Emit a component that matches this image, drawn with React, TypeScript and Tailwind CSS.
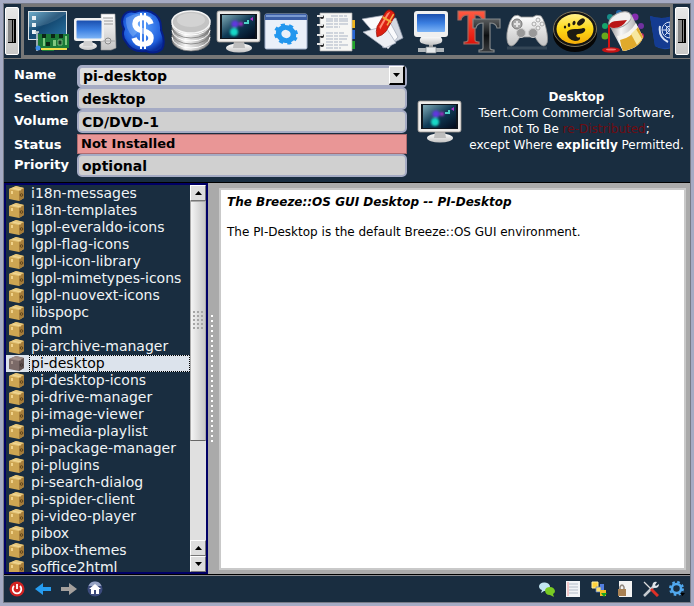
import type { ReactNode } from "react"

const packages = [
	"i18n-messages",
	"i18n-templates",
	"lgpl-everaldo-icons",
	"lgpl-flag-icons",
	"lgpl-icon-library",
	"lgpl-mimetypes-icons",
	"lgpl-nuovext-icons",
	"libspopc",
	"pdm",
	"pi-archive-manager",
	"pi-desktop",
	"pi-desktop-icons",
	"pi-drive-manager",
	"pi-image-viewer",
	"pi-media-playlist",
	"pi-package-manager",
	"pi-plugins",
	"pi-search-dialog",
	"pi-spider-client",
	"pi-video-player",
	"pibox",
	"pibox-themes",
	"soffice2html"
]

const Gradients = () => (
	<svg className="absolute size-0" aria-hidden="true">
		<defs>
			<linearGradient id="blueScreen" x1="0" y1="0" x2="0" y2="1">
				<stop offset="0" stopColor="#1b4fae" />
				<stop offset="0.5" stopColor="#3a7ee0" />
				<stop offset="1" stopColor="#7db4f6" />
			</linearGradient>
			<linearGradient id="tealScreen" x1="0" y1="0" x2="1" y2="1">
				<stop offset="0" stopColor="#7fa9b5" />
				<stop offset="0.5" stopColor="#0f3a56" />
				<stop offset="1" stopColor="#020a1c" />
			</linearGradient>
			<linearGradient id="deepScreen" x1="0" y1="0" x2="1" y2="1">
				<stop offset="0" stopColor="#5ba3c6" />
				<stop offset="0.45" stopColor="#13476f" />
				<stop offset="1" stopColor="#2c77a8" />
			</linearGradient>
			<linearGradient id="plastic" x1="0" y1="0" x2="0" y2="1">
				<stop offset="0" stopColor="#ffffff" />
				<stop offset="1" stopColor="#c3c3c3" />
			</linearGradient>
			<linearGradient id="metal" x1="0" y1="0" x2="1" y2="0">
				<stop offset="0" stopColor="#8b8b8b" />
				<stop offset="0.35" stopColor="#f7f7f7" />
				<stop offset="0.7" stopColor="#c4c4c4" />
				<stop offset="1" stopColor="#777777" />
			</linearGradient>
			<linearGradient id="gold" x1="0" y1="0" x2="0" y2="1">
				<stop offset="0" stopColor="#fff08a" />
				<stop offset="0.5" stopColor="#fdd816" />
				<stop offset="1" stopColor="#f5ac08" />
			</linearGradient>
			<linearGradient id="redInk" x1="0" y1="0" x2="0" y2="1">
				<stop offset="0" stopColor="#ff5a42" />
				<stop offset="1" stopColor="#e01008" />
			</linearGradient>
			<linearGradient id="blackInk" x1="0" y1="0" x2="0" y2="1">
				<stop offset="0" stopColor="#5b5e60" />
				<stop offset="0.5" stopColor="#0c0e10" />
				<stop offset="1" stopColor="#3a3d40" />
			</linearGradient>
			<radialGradient id="coin" cx="0.5" cy="0.4" r="0.6">
				<stop offset="0" stopColor="#5da4ff" />
				<stop offset="0.75" stopColor="#1f5fdd" />
				<stop offset="1" stopColor="#0a2f9c" />
			</radialGradient>
			<filter id="glow" x="-50%" y="-50%" width="200%" height="200%">
				<feGaussianBlur stdDeviation="1.2" />
			</filter>
		</defs>
	</svg>
)

const Icon = ({ children }: { children: ReactNode }) => (
	<svg className="size-[46px] shrink-0" viewBox="0 0 46 46" aria-hidden="true">
		{children}
	</svg>
)

const Gear = ({ color }: { color: string }) => (
	<g>
		<circle r="7.2" fill="none" stroke={color} strokeWidth="5.4" />
		<circle r="10.2" fill="none" stroke={color} strokeWidth="2.8" strokeDasharray="4 4.01" />
	</g>
)

const HardwareIcon = () => (
	<Icon>
		<rect x="4.5" y="3.5" width="38" height="28" fill="url(#deepScreen)" stroke="#dde3e6" />
		<path d="M5 19Q22 20 42 6V4H5Z" fill="#fff" opacity=".12" />
		<path d="M8 8h4v4H8zm0 7h4v4H8zm0 7h4v4H8z" fill="#e9f0f5" />
		<path d="M14 26h31v14H30v3H18v-3h-4z" fill="#1b7a38" />
		<path d="M13 24v19M11 24h4" stroke="#c9d3d2" strokeWidth="1.5" />
		<path d="M18 26h4v4h-4zm9 0h4v4h-4zm8 0h4v4h-4z" fill="#0c2716" />
		<path d="M22 34h4v4h-4z" fill="#0c2716" />
		<path d="M19 30h2v8h-2zm10 2h3v6h-3zm12-4h2v9h-2z" fill="#7fc87f" />
		<path d="M34 32h4v5h-4z" fill="#163d24" stroke="#8fce8f" strokeWidth=".8" />
		<path d="M17 40h13v2H17zm13 0h13v2H30z" fill="#f1dd49" />
		<circle cx="14" cy="40" r="2.5" fill="#3d8de8" />
	</Icon>
)

const ComputerIcon = () => (
	<Icon>
		<path d="M29 6h14l1 34-5 2H29z" fill="url(#plastic)" stroke="#999" strokeWidth=".6" />
		<path d="M31 10h10M31 13h10M31 16h10" stroke="#9a9a9a" />
		<circle cx="36" cy="33" r="3" fill="#ddd" stroke="#8c8c8c" />
		<path d="M28 33h16" stroke="#aaa" />
		<ellipse cx="16" cy="38" rx="9" ry="4" fill="url(#plastic)" />
		<path d="M12 32h8l1 6H11z" fill="#cfcfcf" />
		<rect x="2" y="10" width="30" height="23" rx="2.5" fill="#f1f1f1" />
		<rect x="4.5" y="12.500" width="25" height="18" rx="1" fill="url(#blueScreen)" />
	</Icon>
)

const MoneyIcon = () => (
	<Icon>
		<path
			d="M4 7Q8 2 15 4Q23 1 31 4Q42 9 41 22Q46 34 42 41Q35 47 26 43Q12 45 6 34Q1 28 4 21Q0 13 4 7Z"
			fill="url(#coin)"
			stroke="#061f88"
			strokeWidth="2"
		/>
		<path d="M6 10Q19 2 32 9L13 29Q5 21 6 10Z" fill="#a7d0ff" opacity=".35" />
		<path
			d="M31 16Q29 10 23 10Q15 10 15 16Q15 21 23 23Q31 25 31 30Q31 36 23 36Q16 36 14 30"
			fill="none"
			stroke="#fff"
			strokeWidth="5.5"
		/>
		<path d="M21 5v36M25 5v36" stroke="#fff" strokeWidth="2" />
		<path d="M23 12v22" stroke="#3c7be8" />
	</Icon>
)

const DatabaseIcon = () => (
	<Icon>
		{[33, 26, 20].map(y => (
			<g key={y}>
				<path
					d={`M4 ${y - 6}v5a19 11 0 0 0 38 0v-5z`}
					fill="url(#metal)"
					stroke="#707070"
					strokeWidth=".7"
				/>
				<path d={`M4 ${y - 4}a19 11 0 0 0 38 0`} fill="none" stroke="#fff" />
			</g>
		))}
		<ellipse cx="23" cy="14" rx="19" ry="11" fill="#c4c4c4" stroke="#f5f5f5" strokeWidth="1.5" />
		<ellipse cx="23" cy="12" rx="14" ry="7" fill="#dedede" opacity=".6" />
	</Icon>
)

const DesktopIcon = () => (
	<Icon>
		<ellipse cx="23" cy="40" rx="13" ry="4.5" fill="url(#plastic)" />
		<path d="M18 33h10l1 7H17z" fill="#bdbdbd" />
		<rect x="1" y="3" width="43" height="31" rx="2" fill="#eeecea" stroke="#9b9490" strokeWidth=".8" />
		<rect x="4" y="6" width="37" height="25" fill="#10151d" />
		<rect x="6" y="7" width="33" height="23" fill="url(#tealScreen)" />
		<g filter="url(#glow)">
			<circle cx="19" cy="16" r="3.5" fill="#6138df" />
			<circle cx="18" cy="24" r="4" fill="#15d8c7" />
			<circle cx="25" cy="16" r="2" fill="#b02bce" />
		</g>
		<path d="M28 14h3v-2h2v4h-5z" fill="#4cd3c6" />
		<path d="M34 11l3-2v4z" fill="#b62ed2" />
	</Icon>
)

const WindowIcon = () => (
	<Icon>
		<rect x="1" y="6" width="42" height="35" rx="1.5" fill="#eaf0f9" stroke="#a3b2cc" />
		<path d="M1 7q0-1 1-1h40q1 0 1 1v5H1z" fill="#3c5fa5" />
		<path d="M2 7h40v2H2z" fill="#7899d0" />
		<g transform="translate(22 26) rotate(18) scale(1.05 .9)">
			<Gear color="#2397ee" />
		</g>
	</Icon>
)

const NotebookIcon = () => (
	<Icon>
		<path d="M37 12h6v8h-6z" fill="#f0b51c" />
		<path d="M37 22h6v9h-6z" fill="#2766d6" />
		<path d="M37 33h6v8h-6z" fill="#20a32b" />
		<path d="M8 5h32v38H8z" fill="#f6f6f4" stroke="#aaa" strokeWidth=".7" />
		<path
			d="M19 8h16M14 11h22M14 13h23M14 16h22M14 19h14M14 25h18M14 28h22M14 31h21M14 34h16M14 37h22M14 40h15"
			stroke="#a9b3c4"
			strokeDasharray="7 1 4 1 9 1"
		/>
		{[8, 17, 27, 36].map(y => (
			<g key={y}>
				<circle cx="10" cy={y + 1} r="2" fill="#222" />
				<path d={`M5 ${y}h6`} stroke="#e6e6e6" strokeWidth="2" />
			</g>
		))}
	</Icon>
)

const PenIcon = () => (
	<Icon>
		<path d="M12 12l24-2 7 20-20 10z" fill="#d4d9e2" stroke="#8b95a8" strokeWidth=".7" />
		<path d="M2 11l24-4 12 22-10 12z" fill="#fafafc" stroke="#a2abba" strokeWidth=".7" />
		<path d="M3 24l22-6 11 17-11 5z" fill="#eceef3" stroke="#a2abba" strokeWidth=".7" />
		<g transform="translate(25 15) rotate(30)">
			<path d="M-5-9q0-5 5-5t5 5V7q-1 5-5 9-4-4-5-9z" fill="#dc1f12" stroke="#9c0f08" strokeWidth=".7" />
			<path d="M-3-9q1-3 2-3V8l-2-2z" fill="#ff8b72" />
			<path d="M-5-4H5" stroke="#f1aa36" strokeWidth="2" />
			<path d="M3-12v13" stroke="#f4b04a" strokeWidth="1.5" />
		</g>
	</Icon>
)

const NetworkIcon = () => (
	<Icon>
		<path d="M21 34h4v6h-4z" fill="#ababab" />
		<path d="M10 42h26" stroke="#aeb4b8" strokeWidth="4" />
		<path d="M18 39h10v6H18z" fill="#e6e9ea" stroke="#7d8589" strokeWidth=".7" />
		<path d="M14 28h18q4 4 1 7-10 4-20 0-3-3 1-7z" fill="url(#plastic)" />
		<rect x="6" y="3" width="34" height="26" rx="3" fill="#f0f0f0" />
		<rect x="9" y="6" width="28" height="18" rx="1" fill="url(#blueScreen)" />
	</Icon>
)

const serifT = "M0 0H27V9H24Q23 4 17 4V29Q17 31 21 31V33H6V31Q10 31 10 29V4Q4 4 3 9H0Z"

const FontsIcon = () => (
	<Icon>
		<path d={serifT} transform="translate(2 3)" fill="url(#redInk)" stroke="#a06c62" strokeWidth="1.2" />
		<path
			d={serifT}
			transform="translate(17 11)"
			fill="url(#blackInk)"
			stroke="#84888a"
			strokeWidth="1.2"
		/>
	</Icon>
)

const GamepadIcon = () => (
	<Icon>
		<path
			d="M10 8q4-2 7 1h12q3-3 8-1 4 5 6 17 2 12-3 13-4 0-9-9H16q-5 9-9 9-5-1-4-13 2-13 7-17z"
			fill="url(#plastic)"
			stroke="#939393"
			strokeWidth=".8"
		/>
		<circle cx="13" cy="16" r="5" fill="#aaa" stroke="#777" />
		<path d="M10 16h6M13 13v6" stroke="#e4e4e4" strokeWidth="2" />
		<circle cx="17" cy="25" r="4.5" fill="#999" stroke="#ccc" />
		<circle cx="29" cy="25" r="4.5" fill="#999" stroke="#ccc" />
		<g fill="#eee" stroke="#999" strokeWidth=".8">
			<circle cx="34" cy="12" r="2" />
			<circle cx="30" cy="16" r="2" />
			<circle cx="38" cy="16" r="2" />
			<circle cx="34" cy="20" r="2" />
		</g>
		<path d="M3 40h40" stroke="#85909a" strokeWidth="3" opacity=".25" />
	</Icon>
)

const GnomeIcon = () => (
	<Icon>
		<ellipse cx="23" cy="26" rx="22" ry="18" fill="#060606" />
		<ellipse cx="23" cy="21" rx="21.5" ry="17.5" fill="#141414" stroke="#7f755c" />
		<ellipse cx="23" cy="21" rx="18.5" ry="15" fill="url(#gold)" />
		<g fill="#1d1a12">
			<ellipse cx="29" cy="14" rx="4.5" ry="2.6" transform="rotate(-40 29 14)" />
			<ellipse cx="22" cy="15" rx="1.5" ry="2.2" transform="rotate(20 22 15)" />
			<ellipse cx="17" cy="17" rx="1.3" ry="1.9" />
			<ellipse cx="13" cy="19" rx="1.2" ry="1.6" />
			<path d="M15 24q2-3 8-3t8-1q3 0 2 3-2 3-7 3-3 1-1 3 2 1 3 0 1 4-5 4-8-1-8-9z" />
		</g>
	</Icon>
)

const PaintIcon = () => (
	<Icon>
		<circle cx="10" cy="9" r="3" fill="#168c88" />
		<circle cx="19" cy="5" r="3" fill="#2366a5" />
		<circle cx="5" cy="18" r="3" fill="#17a36a" />
		<circle cx="5" cy="28" r="3.5" fill="#68a81c" />
		<circle cx="35" cy="9" r="3.5" fill="#842cae" />
		<circle cx="41" cy="18" r="3" fill="#7031a0" />
		<circle cx="41" cy="28" r="3" fill="#c32a64" />
		<path d="M9 17L31 6l12 23q-3 11-20 14z" fill="url(#metal)" />
		<path d="M17 28Q29 27 36 15l7 14q-3 11-20 14z" fill="#f7f5ef" />
		<path d="M20 32q11-2 18-13l5 10q-3 11-20 14-2-4-3-11z" fill="#e0aa2c" />
		<path d="M31 26l5-5 6 10-5 6z" fill="#f7e7a0" />
		<ellipse cx="20" cy="12" rx="12" ry="7" transform="rotate(-26 20 12)" fill="#f0f0f0" stroke="#a5a5a5" />
		<path d="M9 17q2-4 8-4l10-1q-5 8-13 8-4 0-5-3z" fill="#b91616" />
		<path d="M9 17v23" stroke="#d51414" strokeWidth="2" />
		<ellipse cx="11" cy="42" rx="9" ry="2.7" fill="#c51414" />
		<ellipse cx="11" cy="41.5" rx="5" ry="1" fill="#f47070" />
	</Icon>
)

const FlagIcon = () => (
	<Icon>
		<path d="M2 8q12 4 22 0t22-2v34q-12-3-22 0T7 38Z" fill="#1c4ba8" />
		<path d="M2 8q12 4 22 0v31Q14 42 7 38Z" fill="#143b91" />
		<g fill="none" stroke="#d7e2f5">
			<circle cx="22" cy="22" r="8" />
			<circle cx="22" cy="22" r="4" />
			<path d="M14 22h16M22 14v16M17 17l10 10M27 17L17 27" />
			<path d="M12 18q-2 11 8 16m12-17q3 11-7 17" strokeWidth="2" />
		</g>
	</Icon>
)

const toolbar = [
	{ label: "Hardware", icon: <HardwareIcon /> },
	{ label: "Computer", icon: <ComputerIcon /> },
	{ label: "Finance", icon: <MoneyIcon /> },
	{ label: "Database", icon: <DatabaseIcon /> },
	{ label: "Desktop", icon: <DesktopIcon /> },
	{ label: "System", icon: <WindowIcon /> },
	{ label: "Documents", icon: <NotebookIcon /> },
	{ label: "Editors", icon: <PenIcon /> },
	{ label: "Network", icon: <NetworkIcon /> },
	{ label: "Fonts", icon: <FontsIcon /> },
	{ label: "Games", icon: <GamepadIcon /> },
	{ label: "Gnome", icon: <GnomeIcon /> },
	{ label: "Graphics", icon: <PaintIcon /> },
	{ label: "Languages", icon: <FlagIcon /> }
]

const Handle = ({ label }: { label: string }) => (
	<button
		aria-label={label}
		className="my-[3px] flex w-[14px] shrink-0 items-center justify-center rounded-xs border border-white bg-linear-to-b from-[#e8e8e8] to-[#c8c8c8]"
	>
		<svg className="h-6 w-2" viewBox="0 0 8 24" aria-hidden="true">
			<path d="M0 0h8v24H0z" fill="#858585" />
			<path d="M0 0h8v1H0zM0 23h8v1H0zM4 0h1v24H4zM6 0h2v24H6z" />
		</svg>
	</button>
)

const BoxIcon = ({ selected }: { selected: boolean }) => (
	<svg className="h-[15px] w-4 shrink-0" viewBox="0 0 16 15" aria-hidden="true">
		<path d="M0 3l7-3 8 2v10l-5 3-10-2z" fill={selected ? "#7b6a68" : "#cda552"} />
		<path d="M0 3l7-3 8 2-5 3z" fill={selected ? "#9a8884" : "#e6c77c"} />
		<path d="M10 5l5-3v10l-5 3z" fill={selected ? "#615251" : "#a67d3a"} />
		<path d="M4 2l8 2" stroke={selected ? "#a8968f" : "#f2d996"} />
		<path d="M3 5v3" stroke={selected ? "#a8968f" : "#f0d28a"} strokeWidth="2" />
		<circle cx="12.5" cy="9" r="1.3" fill="none" stroke={selected ? "#403534" : "#5c431b"} />
	</svg>
)

const Triangle = ({ down = false }: { down?: boolean }) => (
	<svg className="h-1 w-[7px]" viewBox="0 0 7 4" aria-hidden="true">
		<path d={down ? "M0 0h7L3.5 4z" : "M0 4h7L3.5 0z"} />
	</svg>
)

const ScrollButton = ({ label, down }: { label: string; down?: boolean }) => (
	<button
		aria-label={label}
		className="flex h-4 shrink-0 items-center justify-center border border-white border-r-[#777] border-b-[#777] bg-[#dedede]"
	>
		<Triangle down={down} />
	</button>
)

const Scrollbar = () => (
	<div className="flex w-4 shrink-0 flex-col bg-[#e0e0e0]">
		<ScrollButton label="Scroll up" />
		<div className="flex grow-[240] basis-0 items-center justify-center border border-[#aaa] border-b-[#666] bg-linear-to-r from-[#f4f4f4] to-[#c7c7c7]">
			<svg className="h-[19px] w-[11px]" viewBox="0 0 11 19" aria-hidden="true">
				{[1, 5, 9, 13, 17].map(y => (
					<path key={y} d={`M0 ${y}h11`} stroke="#a5a5a5" strokeWidth="2" strokeDasharray="2 2" />
				))}
			</svg>
		</div>
		<div className="grow-[100] basis-0" />
		<ScrollButton label="Scroll up one line" />
		<ScrollButton label="Scroll down" down />
	</div>
)

const fields = [
	{ id: "section", label: "Section", value: "desktop" },
	{ id: "volume", label: "Volume", value: "CD/DVD-1" },
	{ id: "status", label: "Status", value: "Not Installed" },
	{ id: "priority", label: "Priority", value: "optional" }
]

const PackageForm = () => (
	<form className="w-[393px] shrink-0 font-bold text-black">
		<div className="flex h-[23px]">
			<label htmlFor="name" className="w-[63px] text-[13px] leading-[22px] text-white">
				Name
			</label>
			<div className="relative flex-1">
				<select
					id="name"
					defaultValue="pi-desktop"
					className="h-full w-full appearance-none rounded-[5px] border-[3px] border-[#a5abc4] bg-[#e0e0e0] pl-[3px] text-sm leading-4"
				>
					{packages.map(name => (
						<option key={name}>{name}</option>
					))}
				</select>
				<span className="pointer-events-none absolute top-0.5 right-0.5 flex h-[19px] w-4 items-center justify-center border border-white border-r-2 border-b-2 border-r-black border-b-black bg-[#dedede]">
					<Triangle down />
				</span>
			</div>
		</div>
		{fields.map(({ id, label, value }) => (
			<div key={id} className={id === "status" ? "flex h-[21px] pt-px" : "flex h-[23px]"}>
				<label htmlFor={id} className="w-[63px] text-[13px] leading-[22px] text-white">
					{label}
				</label>
				<input
					id={id}
					readOnly
					defaultValue={value}
					className={
						id === "status"
							? "min-w-0 flex-1 border border-[#b06c70] bg-[#e99696] pl-[3px] text-[13px]"
							: "min-w-0 flex-1 rounded-[5px] border-2 border-[#a5abc4] bg-[#d0d0d0] pl-[3px] text-sm"
					}
				/>
			</div>
		))}
	</form>
)

const SmallButton = ({ label, children }: { label: string; children: ReactNode }) => (
	<button aria-label={label} className="size-4">
		<svg className="size-4" viewBox="0 0 16 16" aria-hidden="true">
			{children}
		</svg>
	</button>
)

const StatusBar = () => (
	<footer className="flex h-[27px] shrink-0 items-center justify-between border-t border-[#8b8d92] px-[5px]">
		<div className="flex gap-[10px]">
			<SmallButton label="Quit">
				<circle cx="8" cy="8" r="7.5" fill="#d12222" />
				<path d="M5 5a4.300 4.300 0 1 0 6 0M8 3v5" fill="none" stroke="#fff" strokeWidth="1.8" />
			</SmallButton>
			<SmallButton label="Back">
				<path d="M0 8l8-6v4h8v4H8v4z" fill="#269cf0" />
			</SmallButton>
			<SmallButton label="Forward">
				<path d="M16 8L8 2v4H0v4h8v4z" fill="#a4a09d" />
			</SmallButton>
			<SmallButton label="Home">
				<circle cx="8" cy="8" r="7.5" fill="#3c4b7c" />
				<path d="M1.5 5a7 7 0 0 1 13 0z" fill="#95a2c2" />
				<path d="M8 3l6 5h-2v5H9V9H7v4H4V8H2z" fill="#fff" />
			</SmallButton>
		</div>
		<div className="flex gap-[10px]">
			<SmallButton label="Chat">
				<path d="M0 5q1-4 6-3.500T11 6q0 4-6 4l-3 2 1-3Q0 8 0 5z" fill="#c3e6f2" />
				<path d="M6 9q1-3 5-3t5 4q0 2-2 3l1 3-4-2q-5 0-5-5z" fill="#79cb23" />
			</SmallButton>
			<SmallButton label="Log">
				<path d="M1 0h14v16H1z" fill="#f1f4f7" />
				<path d="M4 3h9M4 6h9M4 9h9M4 12h9" stroke="#b4becb" />
				<path d="M3 1v14" stroke="#e77" strokeWidth=".7" />
			</SmallButton>
			<SmallButton label="Dependencies">
				<path d="M9 3h4v6H9z" fill="#537fe0" />
				<path d="M1 1h6v6H1z" fill="#ffd33c" stroke="#fff1a0" />
				<path d="M5 6h5v5H5z" fill="#ffe16a" stroke="#537fe0" strokeWidth=".7" />
				<path d="M9 9h6v6H9z" fill="#f3be23" />
				<path d="M10 12h6l-3 4z" fill="#16a51d" />
			</SmallButton>
			<SmallButton label="Permissions">
				<path d="M2 0h13v16H2z" fill="#f3f3f3" />
				<path d="M3 9V6q2-4 4 0v3" fill="none" stroke="#8f867d" strokeWidth="1.5" />
				<path d="M1 8h8v7H1z" fill="#a88154" />
			</SmallButton>
			<SmallButton label="Tools">
				<path d="M1 15L11 5" stroke="#c6cbd1" strokeWidth="2.5" />
				<path d="M10 2q2-2 4-1l-2 3 1 1 3-2q0 4-4 4t-2-5z" fill="#dfe5ea" />
				<path d="M1 1l7 7" stroke="#ddd" strokeWidth="1.2" />
				<path d="M8 8l7 7" stroke="#de3027" strokeWidth="3" />
			</SmallButton>
			<SmallButton label="Settings">
				<g transform="translate(7.5 7.500) scale(.65)">
					<circle r="7" fill="none" stroke="#51a9ef" strokeWidth="4" />
					<circle r="10" fill="none" stroke="#51a9ef" strokeWidth="3" strokeDasharray="4 3.85" />
				</g>
				<path d="M11 12h5l-2.500 3z" />
			</SmallButton>
		</div>
	</footer>
)

export default function App() {
	return (
		<div className="flex h-screen flex-col bg-[#a5abc4] p-[3px] font-['DejaVu_Sans',sans-serif]">
			<Gradients />
			<div className="flex min-h-0 flex-1 flex-col border border-[#777b87] bg-[#192d40]">
				<nav className="flex h-[55px] shrink-0 gap-0.5 border-b border-[#777] px-px">
					<Handle label="Scroll toolbar left" />
					<div className="flex min-w-0 flex-1 gap-0.5 overflow-hidden border-[3px] border-[#777]">
						{toolbar.map(({ label, icon }) => (
							<button key={label} aria-label={label} className="shrink-0">
								{icon}
							</button>
						))}
					</div>
					<Handle label="Scroll toolbar right" />
				</nav>

				<header className="flex h-[124px] shrink-0 items-start border-b border-black pt-[5px] pl-[10px]">
					<PackageForm />
					<div className="flex min-w-0 flex-1 items-center pt-[25px] pl-[10px] text-white">
						<DesktopIcon />
						<p className="flex-1 text-center text-xs leading-4 whitespace-nowrap">
							<b>Desktop</b>
							<br />
							Tsert.Com Commercial Software,
							<br />
							not To Be <span className="text-[#6d0c12]">re-Distributed</span>;
							<br />
							except Where <b>explicitly</b> Permitted.
						</p>
					</div>
				</header>

				<main className="flex min-h-0 flex-1 border-b border-black bg-[#aaa]">
					<div className="flex w-[204px] shrink-0 border-2 border-[#000066] bg-[#192d40]">
						<ul className="min-w-0 flex-1 overflow-hidden text-sm text-[#f0f4f6]">
							{packages.map(name => (
								<li key={name}>
									<button
										className={
											name === "pi-desktop"
												? "flex h-[17px] w-full items-center gap-1 bg-[#dce3ec] pl-[3px] text-black"
												: "flex h-[17px] w-full items-center gap-1 pl-[3px]"
										}
									>
										<BoxIcon selected={name === "pi-desktop"} />
										<span
											className={
												name === "pi-desktop"
													? "flex-1 border border-dotted border-black pl-px text-left leading-[15px]"
													: "pl-0.5 leading-[17px]"
											}
										>
											{name}
										</span>
									</button>
								</li>
							))}
						</ul>
						<Scrollbar />
					</div>
					<div className="flex w-[11px] shrink-0 items-center pl-[3px]">
						<svg className="h-32 w-0.5" viewBox="0 0 2 128" aria-hidden="true">
							<path d="M1 0v128" stroke="#fff" strokeWidth="2" strokeDasharray="2 3" />
						</svg>
					</div>
					<article className="mt-[5px] mr-1 mb-1 min-w-0 flex-1 border-2 border-[#c9c9c9] bg-white px-1.5 py-[5px] text-xs leading-[15px] text-black">
						<h1 className="mb-[15px] font-bold italic">
							The Breeze::OS GUI Desktop -- PI-Desktop
						</h1>
						<p>The PI-Desktop is the default Breeze::OS GUI environment.</p>
					</article>
				</main>
				<StatusBar />
			</div>
		</div>
	)
}
